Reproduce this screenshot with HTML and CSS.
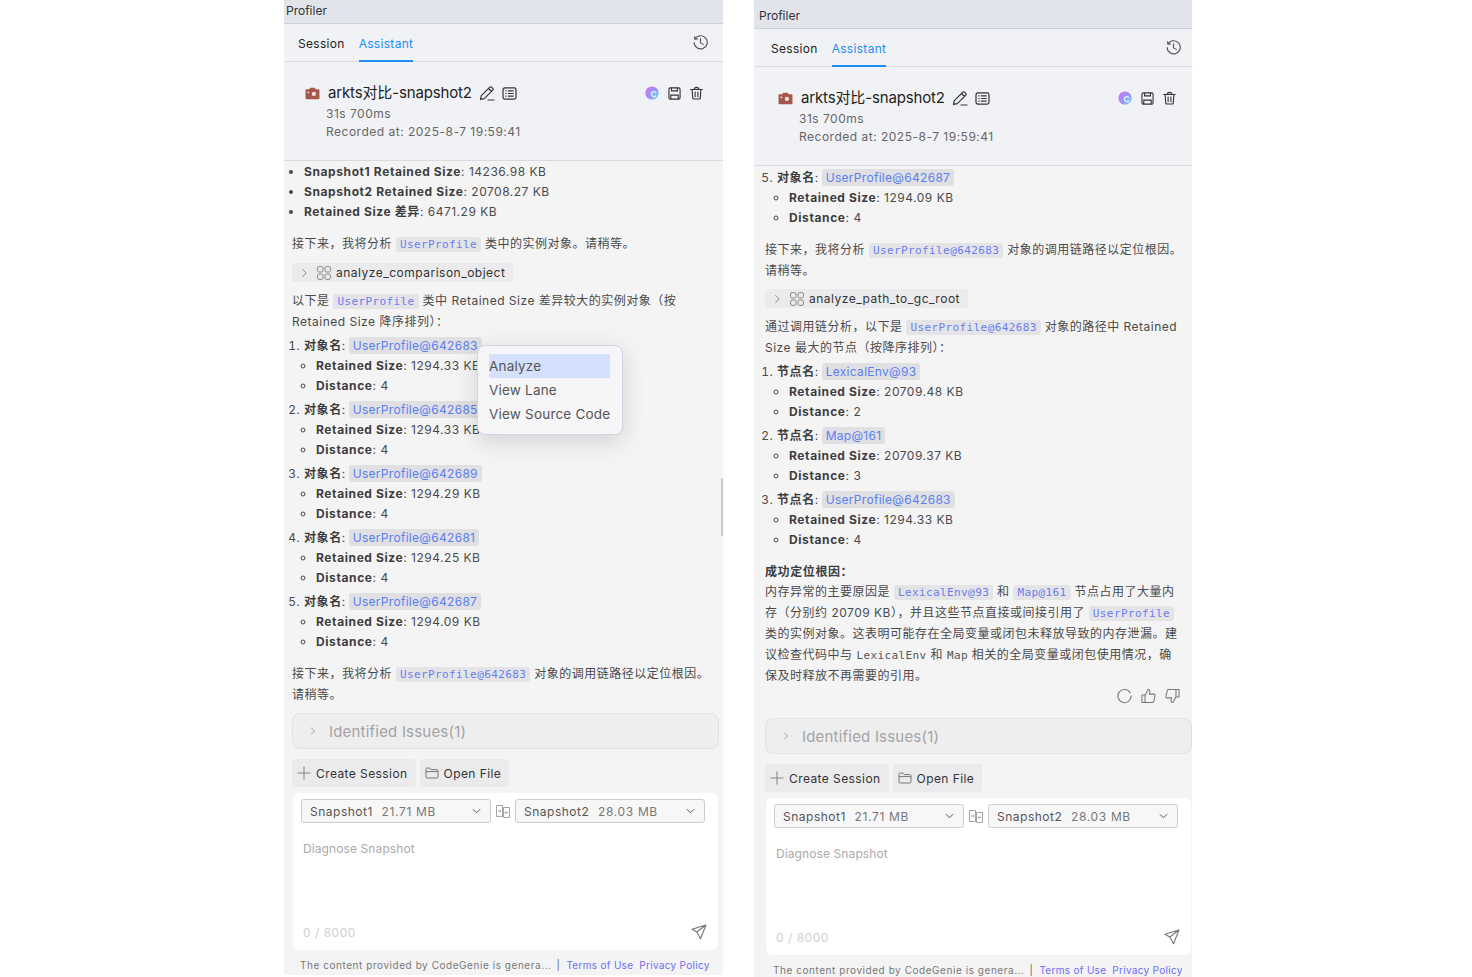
FILE: index.html
```html
<!DOCTYPE html>
<html lang="en">
<head>
<meta charset="utf-8">
<title>Profiler</title>
<link rel="stylesheet" href="styles.css">
</head>
<body>
<svg class="defs" aria-hidden="true">
  <defs>
    <radialGradient id="logoGrad" cx="0.75" cy="0.75" r="0.9">
      <stop offset="0" stop-color="#7fd0ff"/>
      <stop offset="0.45" stop-color="#8f9cfa"/>
      <stop offset="1" stop-color="#d76cf4"/>
    </radialGradient>
  </defs>
  <symbol id="i-history" viewBox="0 0 16 16"><path d="M2.200 4.200A7 7 0 1 1 1.200 8M1.600 1.800l.5 2.800 2.800-.4M8 4v4.400l3 1.600" fill="none" stroke="currentColor" stroke-width="1.200" stroke-linecap="round" stroke-linejoin="round"/></symbol>
  <symbol id="i-camera" viewBox="0 0 16 14"><path d="M1.500 2.500h3L5.600.8h4.800l1.100 1.700h3c.6 0 1 .4 1 1v8.700c0 .6-.4 1-1 1h-13c-.6 0-1-.4-1-1V3.500c0-.6.4-1 1-1z" fill="#a5574c"/><circle cx="9.500" cy="7.500" r="2.300" fill="#f1e4e2"/><rect x="2.500" y="5" width="2" height="1.500" fill="#f1e4e2"/></symbol>
  <symbol id="i-edit" viewBox="0 0 16 16"><path d="M1.500 14.300l.8-3.600L10.800 2.200c.5-.5 1.200-.5 1.700 0l1.300 1.300c.5.500.5 1.200 0 1.700L5.300 13.600l-3.800.7zM9.500 3.500l3 3M9 15h6" fill="none" stroke="currentColor" stroke-width="1.200" stroke-linecap="round" stroke-linejoin="round"/></symbol>
  <symbol id="i-list" viewBox="0 0 16 14"><rect x="1" y="1" width="14" height="12" rx="2" fill="none" stroke="currentColor" stroke-width="1.300"/><path d="M3.500 4.200h1.300M6.300 4.200h6.200M3.500 7h1.300M6.300 7h6.200M3.500 9.800h1.300M6.300 9.800h6.200" stroke="currentColor" stroke-width="1.200"/></symbol>
  <symbol id="i-logo" viewBox="0 0 14 14"><circle cx="7" cy="7" r="6.600" fill="url(#logoGrad)"/><path d="M10.800 6.400A2.500 2.500 0 1 0 10.600 10" fill="none" stroke="#f4f8ff" stroke-width="1.100" stroke-linecap="round"/></symbol>
  <symbol id="i-save" viewBox="0 0 14 14"><path d="M2.500 1h9c.8 0 1.500.7 1.500 1.500v9c0 .8-.7 1.500-1.500 1.500h-9C1.700 13 1 12.300 1 11.500v-9C1 1.700 1.700 1 2.500 1zM3.800 1v3.200h6.400V1M3 8.800h8V13H3z" fill="none" stroke="currentColor" stroke-width="1.200"/></symbol>
  <symbol id="i-trash" viewBox="0 0 14 14"><path d="M.8 3.300h12.400M2.300 3.300l.6 9.100c0 .6.500 1.100 1.100 1.100h6c.6 0 1.100-.5 1.100-1.100l.6-9.100M4.500 3.300C4.500 1.800 5.500 1 7 1s2.500.8 2.500 2.300M5.500 6v5M8.500 6v5" fill="none" stroke="currentColor" stroke-width="1.200" stroke-linecap="round"/></symbol>
  <symbol id="i-chevron" viewBox="0 0 8 12"><path d="M1.500 1.500L6 6l-4.500 4.500" fill="none" stroke="currentColor" stroke-width="1"/></symbol>
  <symbol id="i-grid" viewBox="0 0 14 14"><rect x=".6" y=".6" width="5.400" height="5.400" rx="1.500" fill="none" stroke="currentColor"/><rect x="8" y=".6" width="5.400" height="5.400" rx="1.500" fill="none" stroke="currentColor"/><rect x=".6" y="8" width="5.400" height="5.400" rx="1.500" fill="none" stroke="currentColor"/><rect x="8" y="8" width="5.400" height="5.400" rx="1.500" fill="none" stroke="currentColor"/></symbol>
  <symbol id="i-plus" viewBox="0 0 14 14"><path d="M7 .5v13M.5 7h13" stroke="currentColor" stroke-width="1.100"/></symbol>
  <symbol id="i-folder" viewBox="0 0 14 12"><path d="M1 10V2.200C1 1.500 1.500 1 2.200 1h2.600l1.400 1.600h5.600c.7 0 1.200.5 1.200 1.200V10c0 .6-.5 1-1.200 1H2.200C1.500 11 1 10.600 1 10zM1 4.600h12" fill="none" stroke="currentColor"/></symbol>
  <symbol id="i-down" viewBox="0 0 10 6"><path d="M1 1l4 4 4-4" fill="none" stroke="currentColor" stroke-width="1.100"/></symbol>
  <symbol id="i-compare" viewBox="0 0 14 14"><path d="M.5 1.500h6v11h-6zM7.500 3.500h6v10h-6zM1.800 7h3M3.800 5.800L5 7 3.800 8.200M12.200 8.500h-3M10.200 7.300L9 8.500l1.200 1.200" fill="none" stroke="currentColor" stroke-width=".9"/></symbol>
  <symbol id="i-send" viewBox="0 0 16 16"><path d="M15 1L1 5.200l4.800 2.800L9.500 14.800zM15 1L5.800 8" fill="none" stroke="currentColor" stroke-width="1.100" stroke-linejoin="round"/></symbol>
  <symbol id="i-refresh" viewBox="0 0 16 16"><path d="M14 4.500A7 7 0 1 0 15 8" fill="none" stroke="currentColor" stroke-width="1.200" stroke-linecap="round"/></symbol>
  <symbol id="i-up" viewBox="0 0 16 16"><path d="M1 7h3.300v8H1zM4.300 7.300L7.500 1c1.300 0 2.200.9 2 2.200L9 6h4.800c.9 0 1.400.8 1.200 1.600l-1.400 6.200c-.2.700-.7 1.200-1.400 1.200H4.300" fill="none" stroke="currentColor" stroke-width="1.100" stroke-linejoin="round"/></symbol>
  <symbol id="i-dn" viewBox="0 0 16 16"><path d="M15 9h-3.300V1H15zM11.700 8.700L8.500 15c-1.300 0-2.200-.9-2-2.200L7 10H2.200C1.300 10 .8 9.200 1 8.400l1.400-6.200C2.600 1.500 3.100 1 3.800 1h7.900" fill="none" stroke="currentColor" stroke-width="1.100" stroke-linejoin="round"/></symbol>
</svg>

<section class="panel panel-left">
  <div class="window">
    <div class="titlebar">Profiler</div>
    <nav class="tabs">
      <span class="tab">Session</span>
      <span class="tab tab-active">Assistant</span>
      <svg class="ico ico-history"><use href="#i-history"/></svg>
    </nav>
    <header class="head">
      <div class="head-row">
        <svg class="ico ico-camera"><use href="#i-camera"/></svg>
        <span class="head-title">arkts对比-snapshot2</span>
        <svg class="ico ico-edit"><use href="#i-edit"/></svg>
        <svg class="ico ico-list"><use href="#i-list"/></svg>
        <span class="head-actions">
          <svg class="ico ico-logo"><use href="#i-logo"/></svg>
          <svg class="ico ico-save"><use href="#i-save"/></svg>
          <svg class="ico ico-trash"><use href="#i-trash"/></svg>
        </span>
      </div>
      <div class="head-meta">31s 700ms</div>
      <div class="head-meta">Recorded at: 2025-8-7 19:59:41</div>
    </header>
    <main class="scroll">
      <ul class="bullets">
        <li><strong>Snapshot1 Retained Size</strong>: 14236.98 KB</li>
        <li><strong>Snapshot2 Retained Size</strong>: 20708.27 KB</li>
        <li><strong>Retained Size 差异</strong>: 6471.29 KB</li>
      </ul>
      <p class="para">接下来，我将分析 <code class="code">UserProfile</code> 类中的实例对象。请稍等。</p>
      <div class="tool"><svg class="ico ico-tool-chev"><use href="#i-chevron"/></svg><svg class="ico ico-grid"><use href="#i-grid"/></svg>analyze_comparison_object</div>
      <p class="para">以下是 <code class="code">UserProfile</code> 类中 Retained Size 差异较大的实例对象（按 Retained Size 降序排列）：</p>
      <ol class="items">
        <li><strong>对象名</strong>: <span class="ref">UserProfile@642683</span>
          <ul><li><strong>Retained Size</strong>: 1294.33 KB</li><li><strong>Distance</strong>: 4</li></ul></li>
        <li><strong>对象名</strong>: <span class="ref">UserProfile@642685</span>
          <ul><li><strong>Retained Size</strong>: 1294.33 KB</li><li><strong>Distance</strong>: 4</li></ul></li>
        <li><strong>对象名</strong>: <span class="ref">UserProfile@642689</span>
          <ul><li><strong>Retained Size</strong>: 1294.29 KB</li><li><strong>Distance</strong>: 4</li></ul></li>
        <li><strong>对象名</strong>: <span class="ref">UserProfile@642681</span>
          <ul><li><strong>Retained Size</strong>: 1294.25 KB</li><li><strong>Distance</strong>: 4</li></ul></li>
        <li><strong>对象名</strong>: <span class="ref">UserProfile@642687</span>
          <ul><li><strong>Retained Size</strong>: 1294.09 KB</li><li><strong>Distance</strong>: 4</li></ul></li>
      </ol>
      <p class="para">接下来，我将分析 <code class="code">UserProfile@642683</code> 对象的调用链路径以定位根因。请稍等。</p>
    </main>
    <div class="issues"><svg class="ico ico-issue-chev"><use href="#i-chevron"/></svg>Identified Issues(1)</div>
    <div class="actions">
      <button class="btn"><svg class="ico ico-plus"><use href="#i-plus"/></svg>Create Session</button>
      <button class="btn"><svg class="ico ico-folder"><use href="#i-folder"/></svg>Open File</button>
    </div>
    <div class="card">
      <div class="selects">
        <div class="select"><span>Snapshot1&nbsp;&nbsp;<span class="muted">21.71 MB</span></span><svg class="ico ico-down"><use href="#i-down"/></svg></div>
        <svg class="ico ico-compare"><use href="#i-compare"/></svg>
        <div class="select"><span>Snapshot2&nbsp;&nbsp;<span class="muted">28.03 MB</span></span><svg class="ico ico-down"><use href="#i-down"/></svg></div>
      </div>
      <div class="placeholder">Diagnose Snapshot</div>
      <div class="card-foot"><span class="count">0 / 8000</span><svg class="ico ico-send"><use href="#i-send"/></svg></div>
    </div>
    <footer class="foot"><span>The content provided by CodeGenie is genera...</span><span class="sep">|</span><a class="link">Terms of Use</a><a class="link">Privacy Policy</a></footer>
  </div>
  <div class="menu">
    <div class="menu-item menu-item-on">Analyze</div>
    <div class="menu-item">View Lane</div>
    <div class="menu-item">View Source Code</div>
  </div>
  <div class="thumb"></div>
</section>

<section class="panel panel-right">
  <div class="window">
    <div class="titlebar">Profiler</div>
    <nav class="tabs">
      <span class="tab">Session</span>
      <span class="tab tab-active">Assistant</span>
      <svg class="ico ico-history"><use href="#i-history"/></svg>
    </nav>
    <header class="head">
      <div class="head-row">
        <svg class="ico ico-camera"><use href="#i-camera"/></svg>
        <span class="head-title">arkts对比-snapshot2</span>
        <svg class="ico ico-edit"><use href="#i-edit"/></svg>
        <svg class="ico ico-list"><use href="#i-list"/></svg>
        <span class="head-actions">
          <svg class="ico ico-logo"><use href="#i-logo"/></svg>
          <svg class="ico ico-save"><use href="#i-save"/></svg>
          <svg class="ico ico-trash"><use href="#i-trash"/></svg>
        </span>
      </div>
      <div class="head-meta">31s 700ms</div>
      <div class="head-meta">Recorded at: 2025-8-7 19:59:41</div>
    </header>
    <main class="scroll scroll-right">
      <ol class="items" start="5">
        <li><strong>对象名</strong>: <span class="ref">UserProfile@642687</span>
          <ul><li><strong>Retained Size</strong>: 1294.09 KB</li><li><strong>Distance</strong>: 4</li></ul></li>
      </ol>
      <p class="para">接下来，我将分析 <code class="code">UserProfile@642683</code> 对象的调用链路径以定位根因。请稍等。</p>
      <div class="tool"><svg class="ico ico-tool-chev"><use href="#i-chevron"/></svg><svg class="ico ico-grid"><use href="#i-grid"/></svg>analyze_path_to_gc_root</div>
      <p class="para">通过调用链分析，以下是 <code class="code">UserProfile@642683</code> 对象的路径中 Retained Size 最大的节点（按降序排列）：</p>
      <ol class="items">
        <li><strong>节点名</strong>: <span class="ref">LexicalEnv@93</span>
          <ul><li><strong>Retained Size</strong>: 20709.48 KB</li><li><strong>Distance</strong>: 2</li></ul></li>
        <li><strong>节点名</strong>: <span class="ref">Map@161</span>
          <ul><li><strong>Retained Size</strong>: 20709.37 KB</li><li><strong>Distance</strong>: 3</li></ul></li>
        <li><strong>节点名</strong>: <span class="ref">UserProfile@642683</span>
          <ul><li><strong>Retained Size</strong>: 1294.33 KB</li><li><strong>Distance</strong>: 4</li></ul></li>
      </ol>
      <p class="para"><strong>成功定位根因：</strong></p>
      <p class="para para-flush">内存异常的主要原因是 <code class="code">LexicalEnv@93</code> 和 <code class="code">Map@161</code> 节点占用了大量内存（分别约 20709 KB），并且这些节点直接或间接引用了 <code class="code">UserProfile</code> 类的实例对象。这表明可能存在全局变量或闭包未释放导致的内存泄漏。建议检查代码中与 <code class="plain">LexicalEnv</code> 和 <code class="plain">Map</code> 相关的全局变量或闭包使用情况，确保及时释放不再需要的引用。</p>
      <div class="feedback">
        <svg class="ico ico-fb"><use href="#i-refresh"/></svg>
        <svg class="ico ico-fb"><use href="#i-up"/></svg>
        <svg class="ico ico-fb"><use href="#i-dn"/></svg>
      </div>
    </main>
    <div class="issues"><svg class="ico ico-issue-chev"><use href="#i-chevron"/></svg>Identified Issues(1)</div>
    <div class="actions">
      <button class="btn"><svg class="ico ico-plus"><use href="#i-plus"/></svg>Create Session</button>
      <button class="btn"><svg class="ico ico-folder"><use href="#i-folder"/></svg>Open File</button>
    </div>
    <div class="card">
      <div class="selects">
        <div class="select"><span>Snapshot1&nbsp;&nbsp;<span class="muted">21.71 MB</span></span><svg class="ico ico-down"><use href="#i-down"/></svg></div>
        <svg class="ico ico-compare"><use href="#i-compare"/></svg>
        <div class="select"><span>Snapshot2&nbsp;&nbsp;<span class="muted">28.03 MB</span></span><svg class="ico ico-down"><use href="#i-down"/></svg></div>
      </div>
      <div class="placeholder">Diagnose Snapshot</div>
      <div class="card-foot"><span class="count">0 / 8000</span><svg class="ico ico-send"><use href="#i-send"/></svg></div>
    </div>
    <footer class="foot"><span>The content provided by CodeGenie is genera...</span><span class="sep">|</span><a class="link">Terms of Use</a><a class="link">Privacy Policy</a></footer>
  </div>
</section>
</body>
</html>
```
FILE: styles.css
```css
* { box-sizing: border-box; }
html, body { margin: 0; padding: 0; height: 100%; overflow: hidden; background: #fff; }
body { position: relative; font-family: Inter, "Noto Sans CJK SC", sans-serif; font-size: 12px; letter-spacing: .5px; color: #4a4a4a; }
.defs { position: absolute; width: 0; height: 0; }
.ico { display: block; flex: none; }

/* windows on the desktop canvas */
.panel { position: absolute; overflow: hidden; height: 980px; background: #f4f4f5; }
.panel-left { left: 284px; top: -5px; width: 439px; }
.panel-left .window { margin-left: -3px; }
.panel-right { left: 754px; top: 0; width: 438px; }
.window { width: 442px; height: 980px; display: flex; flex-direction: column; }

.titlebar { flex: none; height: 29px; padding: 5px 0 0 5px; line-height: 22px; background: #e1e4eb; border-bottom: 1px solid #cdd0d6; color: #333; letter-spacing: 0; }

.tabs { flex: none; height: 38px; display: flex; align-items: stretch; padding: 0 15px 0 17px; gap: 14px; background: #f1f2f5; border-bottom: 1px solid #d8dadf; }
.tab { line-height: 40px; color: #222; height: 38px; letter-spacing: .3px; }
.tab-active { color: #1e8ef5; border-bottom: 2px solid #1e8ef5; }
.ico-history { width: 15px; height: 15px; margin: 11px 0 0 auto; color: #555; }

.head { flex: none; height: 99px; padding: 19px 0 0 45px; background: #f1f2f5; border-bottom: 1px solid #d8dadf; }
.head-row { display: flex; align-items: center; height: 24px; }
.ico-camera { width: 15px; height: 13px; margin: 0 8px 0 -21px; }
.head-title { font-size: 15px; letter-spacing: -.15px; color: #222; line-height: 24px; }
.ico-edit { width: 16px; height: 16px; margin-left: 7px; color: #333; }
.ico-list { width: 15px; height: 13px; margin-left: 7px; color: #333; }
.head-actions { display: flex; align-items: center; margin-left: auto; margin-right: 20px; gap: 9px; color: #333; }
.ico-logo { width: 14px; height: 14px; }
.ico-save { width: 13px; height: 13px; }
.ico-trash { width: 13px; height: 14px; }
.head-meta { line-height: 18px; color: #666; }

.scroll { flex: 1 1 0; min-height: 0; overflow: hidden; padding: 1px 12px 0 11px; line-height: 20px; }
.scroll-right { padding-top: 2px; }
.bullets, .items { margin: 0 0 -1px; padding: 0; }
.bullets { padding-left: 12px; list-style: disc; }
.items { padding-left: 12px; list-style: decimal; }
.items > li + li { margin-top: 4px; }
.items ul { margin: 0; padding-left: 12px; list-style: circle; }
strong { font-weight: 700; color: #3d3d3d; letter-spacing: .6px; }
.para { margin: 12px 0 0; line-height: 21px; }
.tool + .para { margin-top: 8px; }
.para + .items { margin-top: 4px; }
.para-flush { margin-top: -1px; padding-right: 2px; }
.code, .plain { font-family: "DejaVu Sans Mono", monospace; font-size: 11px; line-height: 1; letter-spacing: .4px; }
.code { color: #6a7df0; background: #e4e4e7; border-radius: 3px; padding: 1px 4px; }
.plain { color: #555; }
.ref { color: #5a7ff0; background: #e0e0e3; border-radius: 3px; padding: 1px 4px; letter-spacing: .3px; margin-left: -1px; }

.tool { display: inline-flex; align-items: center; height: 19px; margin-top: 9px; padding-right: 8px; background: #ebebed; border-radius: 3px; color: #333; vertical-align: top; }
.scroll-right .tool { margin-top: 8px; }
.ico-tool-chev { width: 7px; height: 10px; margin: 0 9px; color: #777; }
.ico-grid { width: 14px; height: 14px; margin-right: 5px; color: #888; }

.feedback { display: flex; justify-content: flex-end; gap: 9px; padding: 2px 4px 0 0; color: #777; }
.ico-fb { width: 15px; height: 16px; }

.issues { flex: none; display: flex; align-items: center; height: 36px; margin: 0 4px 0 11px; padding-left: 17px; background: #eeeeef; border: 1px solid #e2e2e5; border-radius: 8px; font-size: 15px; letter-spacing: .2px; color: #a3a3a3; }
.ico-issue-chev { width: 6px; height: 10px; margin-right: 13px; color: #888; }

.actions { flex: none; display: flex; gap: 4px; margin: 10px 4px 0 11px; }
.btn { display: flex; align-items: center; height: 28px; padding: 0 8px 0 5px; background: #ebebed; border: 0; border-radius: 3px; font: inherit; letter-spacing: .42px; color: #333; }
.ico-plus { width: 14px; height: 14px; margin-right: 5px; color: #888; }
.ico-folder { width: 14px; height: 12px; margin-right: 5px; color: #777; }

.card { flex: none; height: 157px; margin: 6px 5px 0 12px; padding: 6px 13px 0 8px; background: #fff; border-radius: 6px; display: flex; flex-direction: column; }
.selects { display: flex; align-items: center; gap: 5px; }
.select { flex: 1 1 0; height: 24px; display: flex; align-items: center; justify-content: space-between; padding: 0 9px 0 8px; border: 1px solid #cbcbd2; border-radius: 3px; background: #f7f7f8; color: #555; }
.muted { color: #777; margin-left: 1px; letter-spacing: .65px; }
.ico-down { width: 9px; height: 6px; color: #555; }
.ico-compare { width: 14px; height: 14px; color: #999; }
.placeholder { margin: 16px 0 0 2px; line-height: 20px; letter-spacing: .1px; color: #aaa; }
.card-foot { margin-top: auto; padding: 0 0 10px 2px; display: flex; justify-content: space-between; align-items: center; margin-right: -2px; }
.count { color: #cfcfcf; }
.ico-send { width: 16px; height: 16px; color: #777; }

.foot { flex: none; display: flex; margin: 7px 0 0 19px; padding-bottom: 2px; font-size: 10px; line-height: 16px; color: #777; white-space: nowrap; letter-spacing: .55px; }
.sep { margin: 0 6px 0 5px; color: #666; }
.link { color: #6a6cf5; margin-right: 6px; letter-spacing: .3px; }

/* overlays */
.menu { position: absolute; left: 193px; top: 350px; width: 146px; height: 90px; padding: 8px 12px 8px 11px; background: #f6f6f8; border: 1px solid #d3d3e3; border-radius: 8px; box-shadow: 0 6px 24px rgba(0,0,0,.14); font-size: 13.500px; color: #555; }
.menu-item { height: 24px; line-height: 24px; white-space: nowrap; letter-spacing: .2px; }
.menu-item-on { background: #d4e1fc; }
.thumb { position: absolute; right: 0; top: 483px; width: 2px; height: 58px; background: #c9c9c9; }
```
